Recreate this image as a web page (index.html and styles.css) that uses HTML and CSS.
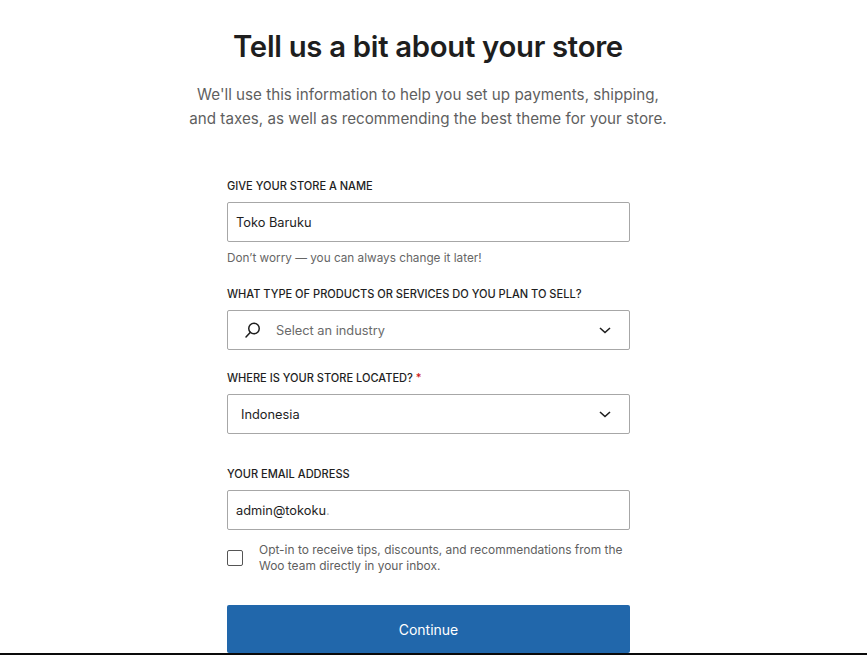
FILE: index.html
```html
<!DOCTYPE html>
<html lang="en">

<head>
    <meta charset="UTF-8">
    <meta name="viewport" content="width=device-width, initial-scale=1.0">
    <title>Tell us a bit about your store</title>
    <link rel="stylesheet" href="styles.css">
</head>

<body>
    <main class="page">
        <h1>Tell us a bit about your store</h1>
        <p class="intro">We'll use this information to help you set up payments, shipping,<br>and taxes, as well as recommending the best theme for your store.</p>

        <form class="store-form">
            <div class="form-group group-name">
                <label>Give your store a name</label>
                <div class="field"><span class="value">Toko Baruku</span></div>
                <p class="help">Don’t worry — you can always change it later!</p>
            </div>

            <div class="form-group group-industry">
                <label>What type of products or services do you plan to sell?</label>
                <div class="field field-select">
                    <svg class="icon-search" width="24" height="24" viewBox="0 0 24 24" fill="none" stroke="#1e1e1e" stroke-width="1.5">
                        <circle cx="13" cy="10.5" r="5.25"></circle>
                        <path d="M9.2 14.4 5 19" stroke-linecap="round"></path>
                    </svg>
                    <span class="placeholder">Select an industry</span>
                    <svg class="icon-chevron" width="24" height="24" viewBox="0 0 24 24" fill="none" stroke="#1e1e1e" stroke-width="1.6">
                        <path d="M7 10l5 4.5 5-4.5"></path>
                    </svg>
                </div>
            </div>

            <div class="form-group group-location">
                <label>Where is your store located? <span class="required">*</span></label>
                <div class="field field-select field-country">
                    <span class="value">Indonesia</span>
                    <svg class="icon-chevron" width="24" height="24" viewBox="0 0 24 24" fill="none" stroke="#1e1e1e" stroke-width="1.6">
                        <path d="M7 10l5 4.5 5-4.5"></path>
                    </svg>
                </div>
            </div>

            <div class="form-group group-email">
                <label>Your email address</label>
                <div class="field"><span class="value">admin@tokoku<span class="faded">.</span></span></div>
            </div>

            <div class="opt-in">
                <span class="checkbox"></span>
                <p>Opt-in to receive tips, discounts, and recommendations from the Woo team directly in your inbox.</p>
            </div>

            <button type="button" class="continue">Continue</button>
        </form>
    </main>

    <div class="bottom-bar"></div>
</body>

</html>
```

FILE: styles.css
```css
* {
    box-sizing: border-box;
}

html,
body {
    height: 100%;
}

body {
    margin: 0;
    background-color: #fff;
    font-family: Inter, "Liberation Sans", sans-serif;
    color: #1e1e1e;
    overflow: hidden;
}

.page {
    width: 856px;
    padding-top: 28px;
}

h1 {
    margin: 0;
    font-size: 29.3px;
    line-height: 38px;
    font-weight: 600;
    letter-spacing: -0.3px;
    color: #1e1e1e;
    text-align: center;
}

.intro {
    margin: 17px 0 0;
    font-size: 15.2px;
    line-height: 24px;
    color: #5f5f5f;
    text-align: center;
}

.store-form {
    width: 403px;
    margin: 47px 0 0 227px;
}

.form-group label {
    display: block;
    font-size: 11.05px;
    line-height: 16px;
    font-weight: 500;
    text-transform: uppercase;
    color: #1e1e1e;
    margin-bottom: 8px;
}

.group-industry {
    margin-top: 20px;
}

.group-location {
    margin-top: 20px;
}

.group-email {
    margin-top: 32px;
}

.required {
    color: #cc1818;
}

.field {
    display: flex;
    align-items: center;
    height: 40px;
    padding: 0 8px;
    background-color: #fff;
    border: 1px solid #a7a7a7;
    border-radius: 2px;
    font-size: 12.8px;
}

.field-select {
    padding: 0 12px 0 13px;
}

.value {
    color: #1e1e1e;
}

.faded {
    color: #b5b5b5;
}

.placeholder {
    margin-left: 11px;
    color: #6a6a6a;
}

.icon-chevron {
    margin-left: auto;
}

.help {
    margin: 8px 0 0;
    font-size: 11.75px;
    line-height: 16px;
    color: #666;
}

.opt-in {
    display: flex;
    align-items: center;
    margin-top: 12px;
}

.checkbox {
    flex: none;
    width: 16px;
    height: 16px;
    border: 1px solid #555;
    border-radius: 2px;
}

.opt-in p {
    margin: 0 0 0 16px;
    font-size: 11.95px;
    line-height: 16px;
    color: #5f5f5f;
}

.continue {
    display: block;
    width: 100%;
    height: 48px;
    margin-top: 31px;
    border: none;
    border-radius: 2px;
    background-color: #2167ab;
    color: #fff;
    font-family: inherit;
    font-size: 14px;
    cursor: pointer;
}

.bottom-bar {
    position: absolute;
    left: 0;
    right: 0;
    bottom: 0;
    height: 2px;
    background-color: #0a0a0a;
}
```
